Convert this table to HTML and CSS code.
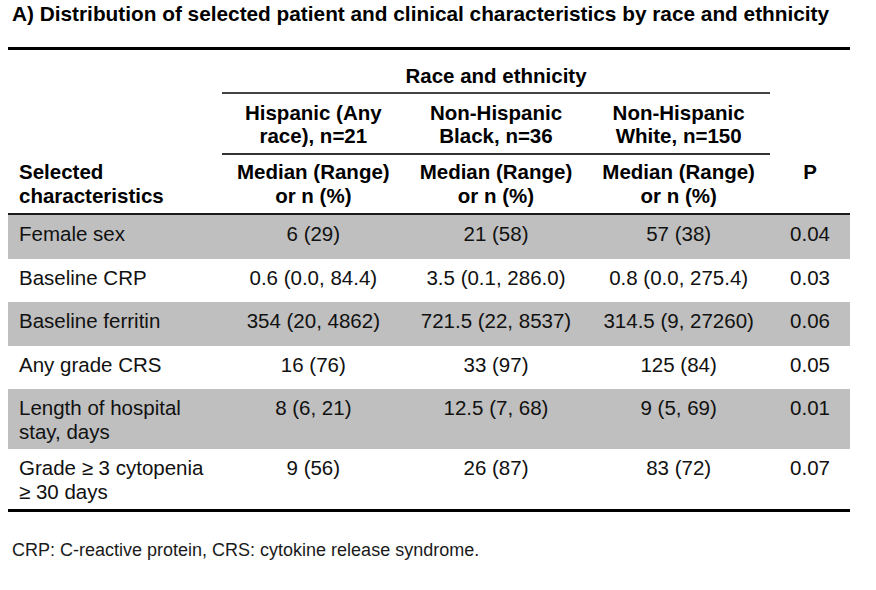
FILE: index.html
```html
<!DOCTYPE html>
<html lang="en">
<head>
<meta charset="utf-8">
<title>Distribution of selected patient and clinical characteristics</title>
<link rel="stylesheet" href="styles.css">
</head>
<body>
<div class="page">
  <h1 class="title">A) Distribution of selected patient and clinical characteristics by race and ethnicity</h1>
  <table class="tbl">
    <colgroup>
      <col class="c-label">
      <col class="c-data">
      <col class="c-data">
      <col class="c-data">
      <col class="c-p">
    </colgroup>
    <thead>
      <tr class="hr1">
        <th></th>
        <th colspan="3" class="group">Race and ethnicity</th>
        <th></th>
      </tr>
      <tr class="hr2">
        <th></th>
        <th class="sub">Hispanic (Any<br>race), n=21</th>
        <th class="sub">Non-Hispanic<br>Black, n=36</th>
        <th class="sub">Non-Hispanic<br>White, n=150</th>
        <th></th>
      </tr>
      <tr class="hr3">
        <th class="label">Selected<br>characteristics</th>
        <th>Median (Range)<br>or n (%)</th>
        <th>Median (Range)<br>or n (%)</th>
        <th>Median (Range)<br>or n (%)</th>
        <th>P</th>
      </tr>
    </thead>
    <tbody>
      <tr class="shade">
        <td class="label">Female sex</td><td>6 (29)</td><td>21 (58)</td><td>57 (38)</td><td>0.04</td>
      </tr>
      <tr>
        <td class="label">Baseline CRP</td><td>0.6 (0.0, 84.4)</td><td>3.5 (0.1, 286.0)</td><td>0.8 (0.0, 275.4)</td><td>0.03</td>
      </tr>
      <tr class="shade">
        <td class="label">Baseline ferritin</td><td>354 (20, 4862)</td><td>721.5 (22, 8537)</td><td>314.5 (9, 27260)</td><td>0.06</td>
      </tr>
      <tr>
        <td class="label">Any grade CRS</td><td>16 (76)</td><td>33 (97)</td><td>125 (84)</td><td>0.05</td>
      </tr>
      <tr class="shade">
        <td class="label">Length of hospital<br>stay, days</td><td>8 (6, 21)</td><td>12.5 (7, 68)</td><td>9 (5, 69)</td><td>0.01</td>
      </tr>
      <tr class="last">
        <td class="label">Grade ≥ 3 cytopenia<br>≥ 30 days</td><td>9 (56)</td><td>26 (87)</td><td>83 (72)</td><td>0.07</td>
      </tr>
    </tbody>
  </table>
  <p class="note">CRP: C-reactive protein, CRS: cytokine release syndrome.</p>
</div>
</body>
</html>
```
FILE: styles.css
```css
html, body {
  margin: 0;
  padding: 0;
  background: #ffffff;
}

body {
  font-family: "Liberation Sans", Arial, Helvetica, sans-serif;
  color: #111111;
}

.page {
  padding: 0 8px;
}

.title {
  margin: 0;
  padding: 2px 0 0 4px;
  font-size: 20.8px;
  line-height: 24px;
  font-weight: bold;
  color: #000000;
}

.tbl {
  margin-top: 21px;
  width: 842px;
  table-layout: fixed;
  border-collapse: separate;
  border-spacing: 0;
  font-size: 20.5px;
}

.c-label { width: 214px; }
.c-data { width: 182.67px; }
.c-p { width: 80px; }

.tbl th {
  font-weight: bold;
  color: #000000;
  text-align: center;
  padding: 0;
}

.hr1 th {
  border-top: 3px solid #000000;
  vertical-align: bottom;
  padding: 14px 0 5px;
  line-height: 23px;
}

.hr1 .group {
  border-bottom: 2px solid #444444;
}

.hr2 th {
  vertical-align: bottom;
  padding: 7px 0 6px;
  line-height: 23px;
}

.hr2 .sub {
  border-bottom: 2px solid #333333;
}

.hr3 th {
  vertical-align: top;
  padding: 5px 0 6px;
  line-height: 23.5px;
  border-bottom: 2px solid #1a1a1a;
}

.tbl th.label,
.tbl td.label {
  text-align: left;
  padding-left: 11px;
}

.tbl tbody tr {
  height: 43.5px;
}

.tbl td {
  vertical-align: top;
  text-align: center;
  padding: 7px 0 6px;
  line-height: 23.5px;
}

.tbl tr.shade td {
  background: #bfbfbf;
}

.tbl tr.last td {
  border-bottom: 3px solid #000000;
}

.note {
  margin: 27px 0 0;
  padding-left: 4px;
  font-size: 18px;
  line-height: 22px;
  color: #1a1a1a;
}
```
